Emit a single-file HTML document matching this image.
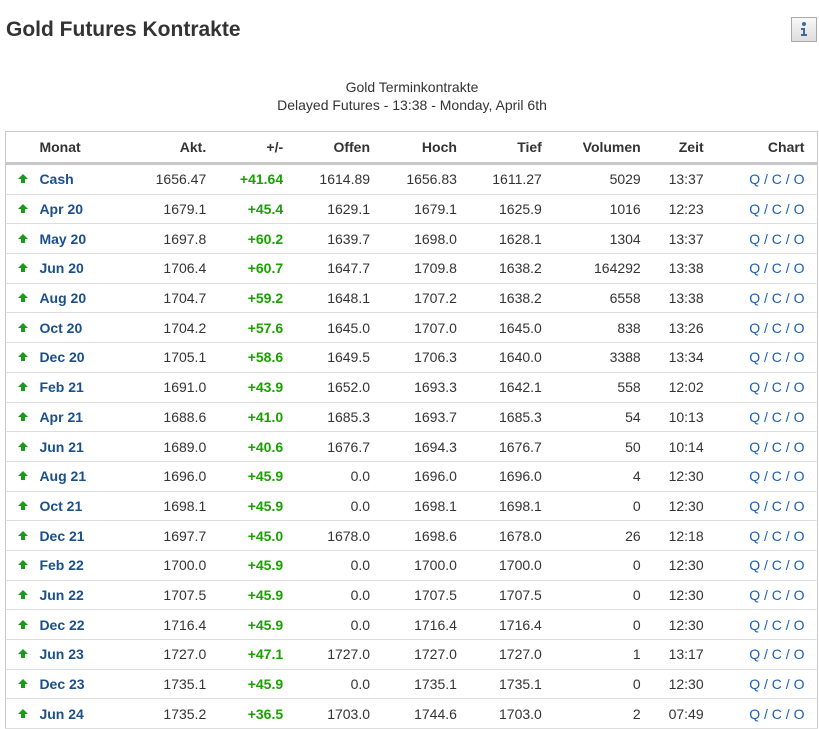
<!DOCTYPE html>
<html><head><meta charset="utf-8"><style>
body{margin:0;background:#fff;font-family:"Liberation Sans",Arial,sans-serif;color:#333;width:819px;height:722px;overflow:hidden;position:relative}
h1{position:absolute;left:6px;top:18px;margin:0;font-size:21px;font-weight:bold;color:#333}
.info{position:absolute;left:791px;top:17px;width:26px;height:25px;border:1px solid #aaa;background:linear-gradient(#f8f8f8,#ddd);box-sizing:border-box}
.cap{position:absolute;left:0;width:824px;text-align:center;font-size:14px;color:#333}
table{position:absolute;left:5px;top:131px;width:813px;border-collapse:collapse;border:1px solid #c8c8c8;font-size:14px}
th{height:30px;font-weight:bold;text-align:right;border-bottom:3px solid #c8c8c8;padding:0;color:#333}
td{height:28.7px;text-align:right;border-bottom:1px solid #ddd;padding:0}
td.m,th.m{text-align:left}
td.m{color:#1a4f8b;font-weight:bold}
td.g{color:#1aa000;font-weight:bold}
td.c{color:#1a5fb4}
.ar{display:inline-block;width:0;height:0;border-left:5px solid transparent;border-right:5px solid transparent;border-bottom:5px solid #1a9a1a;position:relative;top:-5px}
.ar:after{content:"";position:absolute;left:-2px;top:5px;width:4px;height:4px;background:#1a9a1a}
</style></head><body>
<h1>Gold Futures Kontrakte</h1>
<div class="info"><svg width="24" height="23" viewBox="0 0 24 23"><circle cx="12" cy="6" r="2" fill="#3d6a9a"/><path d="M9 10h4v6h2v2H9v-2h2v-4H9z" fill="#3d6a9a"/></svg></div>
<div class="cap" style="top:79px">Gold Terminkontrakte</div>
<div class="cap" style="top:97px">Delayed Futures - 13:38 - Monday, April 6th</div>
<table>
<colgroup><col style="width:34px"><col style="width:70px"><col style="width:97px"><col style="width:77px"><col style="width:87px"><col style="width:87px"><col style="width:85px"><col style="width:99px"><col style="width:63px"><col style="width:101px"><col style="width:13px"></colgroup>
<tr><th></th><th class="m">Monat</th><th>Akt.</th><th>+/-</th><th>Offen</th><th>Hoch</th><th>Tief</th><th>Volumen</th><th>Zeit</th><th>Chart</th><th></th></tr>
<tr><td style="text-align:center"><span class="ar"></span></td><td class="m">Cash</td><td>1656.47</td><td class="g">+41.64</td><td>1614.89</td><td>1656.83</td><td>1611.27</td><td>5029</td><td>13:37</td><td class="c">Q / C / O</td><td></td></tr>
<tr><td style="text-align:center"><span class="ar"></span></td><td class="m">Apr 20</td><td>1679.1</td><td class="g">+45.4</td><td>1629.1</td><td>1679.1</td><td>1625.9</td><td>1016</td><td>12:23</td><td class="c">Q / C / O</td><td></td></tr>
<tr><td style="text-align:center"><span class="ar"></span></td><td class="m">May 20</td><td>1697.8</td><td class="g">+60.2</td><td>1639.7</td><td>1698.0</td><td>1628.1</td><td>1304</td><td>13:37</td><td class="c">Q / C / O</td><td></td></tr>
<tr><td style="text-align:center"><span class="ar"></span></td><td class="m">Jun 20</td><td>1706.4</td><td class="g">+60.7</td><td>1647.7</td><td>1709.8</td><td>1638.2</td><td>164292</td><td>13:38</td><td class="c">Q / C / O</td><td></td></tr>
<tr><td style="text-align:center"><span class="ar"></span></td><td class="m">Aug 20</td><td>1704.7</td><td class="g">+59.2</td><td>1648.1</td><td>1707.2</td><td>1638.2</td><td>6558</td><td>13:38</td><td class="c">Q / C / O</td><td></td></tr>
<tr><td style="text-align:center"><span class="ar"></span></td><td class="m">Oct 20</td><td>1704.2</td><td class="g">+57.6</td><td>1645.0</td><td>1707.0</td><td>1645.0</td><td>838</td><td>13:26</td><td class="c">Q / C / O</td><td></td></tr>
<tr><td style="text-align:center"><span class="ar"></span></td><td class="m">Dec 20</td><td>1705.1</td><td class="g">+58.6</td><td>1649.5</td><td>1706.3</td><td>1640.0</td><td>3388</td><td>13:34</td><td class="c">Q / C / O</td><td></td></tr>
<tr><td style="text-align:center"><span class="ar"></span></td><td class="m">Feb 21</td><td>1691.0</td><td class="g">+43.9</td><td>1652.0</td><td>1693.3</td><td>1642.1</td><td>558</td><td>12:02</td><td class="c">Q / C / O</td><td></td></tr>
<tr><td style="text-align:center"><span class="ar"></span></td><td class="m">Apr 21</td><td>1688.6</td><td class="g">+41.0</td><td>1685.3</td><td>1693.7</td><td>1685.3</td><td>54</td><td>10:13</td><td class="c">Q / C / O</td><td></td></tr>
<tr><td style="text-align:center"><span class="ar"></span></td><td class="m">Jun 21</td><td>1689.0</td><td class="g">+40.6</td><td>1676.7</td><td>1694.3</td><td>1676.7</td><td>50</td><td>10:14</td><td class="c">Q / C / O</td><td></td></tr>
<tr><td style="text-align:center"><span class="ar"></span></td><td class="m">Aug 21</td><td>1696.0</td><td class="g">+45.9</td><td>0.0</td><td>1696.0</td><td>1696.0</td><td>4</td><td>12:30</td><td class="c">Q / C / O</td><td></td></tr>
<tr><td style="text-align:center"><span class="ar"></span></td><td class="m">Oct 21</td><td>1698.1</td><td class="g">+45.9</td><td>0.0</td><td>1698.1</td><td>1698.1</td><td>0</td><td>12:30</td><td class="c">Q / C / O</td><td></td></tr>
<tr><td style="text-align:center"><span class="ar"></span></td><td class="m">Dec 21</td><td>1697.7</td><td class="g">+45.0</td><td>1678.0</td><td>1698.6</td><td>1678.0</td><td>26</td><td>12:18</td><td class="c">Q / C / O</td><td></td></tr>
<tr><td style="text-align:center"><span class="ar"></span></td><td class="m">Feb 22</td><td>1700.0</td><td class="g">+45.9</td><td>0.0</td><td>1700.0</td><td>1700.0</td><td>0</td><td>12:30</td><td class="c">Q / C / O</td><td></td></tr>
<tr><td style="text-align:center"><span class="ar"></span></td><td class="m">Jun 22</td><td>1707.5</td><td class="g">+45.9</td><td>0.0</td><td>1707.5</td><td>1707.5</td><td>0</td><td>12:30</td><td class="c">Q / C / O</td><td></td></tr>
<tr><td style="text-align:center"><span class="ar"></span></td><td class="m">Dec 22</td><td>1716.4</td><td class="g">+45.9</td><td>0.0</td><td>1716.4</td><td>1716.4</td><td>0</td><td>12:30</td><td class="c">Q / C / O</td><td></td></tr>
<tr><td style="text-align:center"><span class="ar"></span></td><td class="m">Jun 23</td><td>1727.0</td><td class="g">+47.1</td><td>1727.0</td><td>1727.0</td><td>1727.0</td><td>1</td><td>13:17</td><td class="c">Q / C / O</td><td></td></tr>
<tr><td style="text-align:center"><span class="ar"></span></td><td class="m">Dec 23</td><td>1735.1</td><td class="g">+45.9</td><td>0.0</td><td>1735.1</td><td>1735.1</td><td>0</td><td>12:30</td><td class="c">Q / C / O</td><td></td></tr>
<tr><td style="text-align:center"><span class="ar"></span></td><td class="m">Jun 24</td><td>1735.2</td><td class="g">+36.5</td><td>1703.0</td><td>1744.6</td><td>1703.0</td><td>2</td><td>07:49</td><td class="c">Q / C / O</td><td></td></tr>
</table>
</body></html>
